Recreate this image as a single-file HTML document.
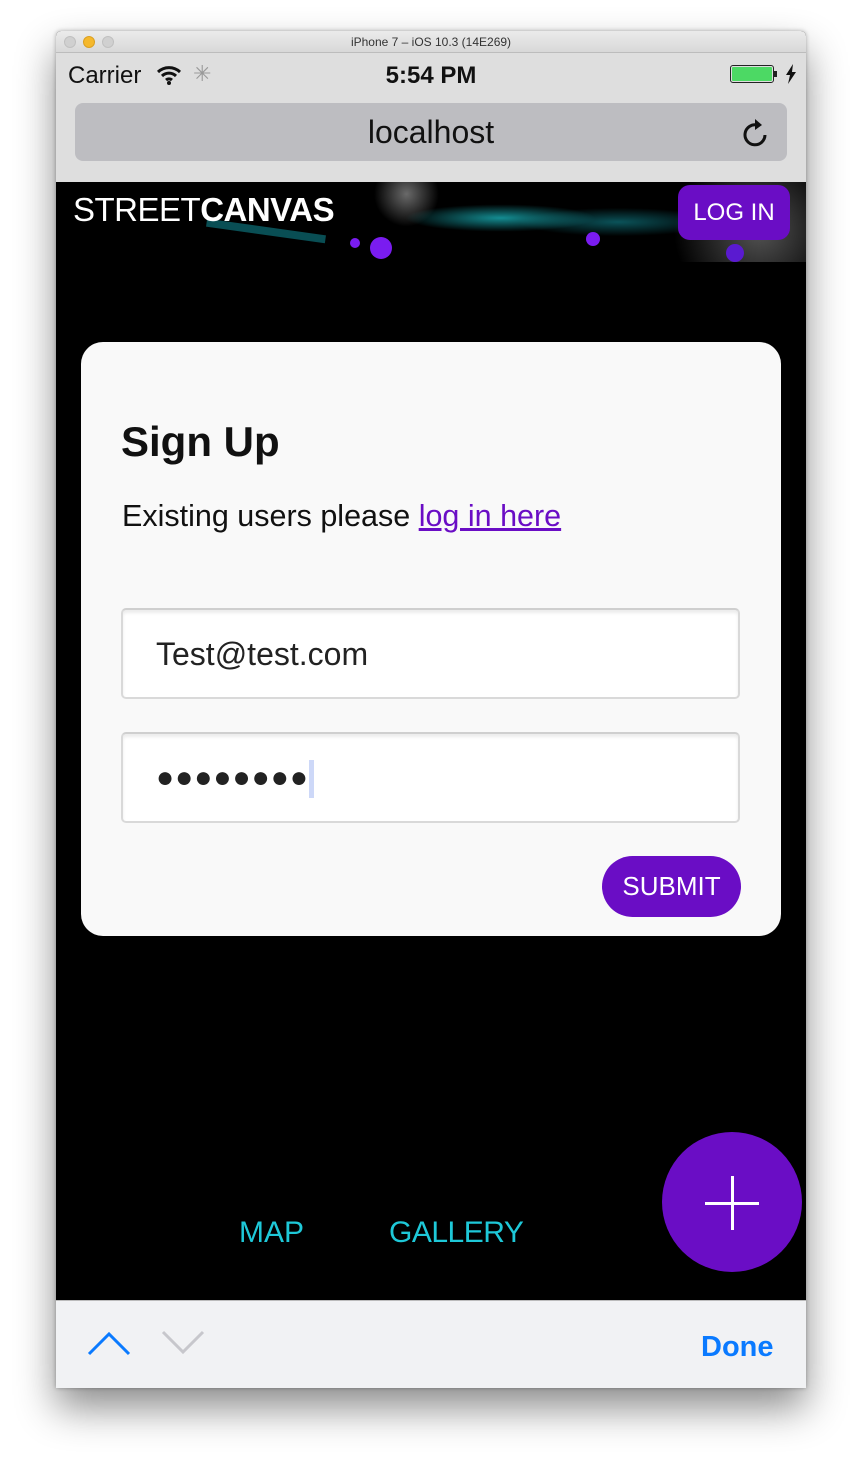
<!DOCTYPE html>
<html><head><meta charset="utf-8"><style>
*{margin:0;padding:0;box-sizing:border-box}
body{width:862px;height:1468px;background:#fff;position:relative;overflow:hidden;font-family:"Liberation Sans",sans-serif}
.win{position:absolute;left:56px;top:31px;width:750px;height:1357px;background:#000;box-shadow:0 20px 40px rgba(0,0,0,.45),0 0 4px rgba(0,0,0,.3);border-radius:5px 5px 0 0;overflow:hidden}
.title{position:absolute;left:0;top:0;width:750px;height:22px;background:linear-gradient(#ebebeb,#d8d8d8);border-bottom:1px solid #bcbcbc;font-size:12px;color:#333;text-align:center;line-height:22px}
.dot{position:absolute;top:5px;width:12px;height:12px;border-radius:50%;background:#d0d0d0;border:1px solid #c0c0c0}
.status{position:absolute;left:0;top:22px;width:750px;height:129px;background:#dedede}
.abs{position:absolute}
.url{position:absolute;left:19px;top:50px;width:712px;height:58px;background:#bdbdc1;border-radius:8px;text-align:center;line-height:58px;font-size:32px;color:#111}
.banner{position:absolute;left:0;top:151px;width:750px;height:80px;background:#000;overflow:hidden}
.card{position:absolute;left:25px;top:311px;width:700px;height:594px;background:#f9f9f9;border-radius:22px}
.inp{position:absolute;left:40px;width:619px;height:91px;background:#fff;border:2px solid #d9d9d9;border-top-color:#cfcfcf;border-radius:5px;box-shadow:inset 0 3px 3px rgba(0,0,0,.08);font-size:32px;color:#222;padding-left:33px;line-height:88px}
</style></head><body>
<div class="win">
<div class="title"><span class="dot" style="left:8px"></span><span class="dot" style="left:27px;background:#f5b82c;border-color:#dba022"></span><span class="dot" style="left:46px"></span>iPhone 7 – iOS 10.3 (14E269)</div>
<div class="status">
<div class="abs" style="left:12px;top:9px;font-size:24px;color:#111">Carrier</div>
<svg class="abs" style="left:100px;top:12px" width="26" height="20" viewBox="0 0 26 20"><path d="M2 7a16 16 0 0 1 22 0M6 11a10 10 0 0 1 14 0M10 15a4.5 4.5 0 0 1 6 0" stroke="#111" stroke-width="3" fill="none"/><circle cx="13" cy="18" r="2" fill="#111"/></svg>
<div class="abs" style="left:137px;top:8px;font-size:22px;color:#999">✳</div>
<div class="abs" style="left:0;width:750px;text-align:center;top:9px;font-size:24px;font-weight:bold;color:#111">5:54 PM</div>
<div class="abs" style="left:674px;top:12px;width:44px;height:18px;border:1.5px solid #222;border-radius:3px;padding:1px"><div style="width:100%;height:100%;background:#4cd964;border-radius:1px"></div></div>
<div class="abs" style="left:718px;top:18px;width:3px;height:6px;background:#222"></div>
<svg class="abs" style="left:729px;top:11px" width="12" height="20" viewBox="0 0 12 20"><path d="M8 0L1 11h4l-2 9 8-12H7z" fill="#111"/></svg>
<div class="url">localhost
<svg class="abs" style="left:666px;top:14px" width="30" height="32" viewBox="0 0 30 32"><path d="M24 18a10 10 0 1 1-8-10" stroke="#111" stroke-width="3" fill="none"/><path d="M14 2l7 6-7 5z" fill="#111"/></svg></div>
</div>
<div class="banner">
<div class="abs" style="left:280px;top:0;width:470px;height:80px;background:radial-gradient(ellipse at 35% 45%,rgba(28,200,208,.7) 0,transparent 22%),radial-gradient(ellipse at 60% 50%,rgba(18,138,149,.6) 0,transparent 25%),radial-gradient(circle at 90% 60%,rgba(140,140,140,.6) 0,transparent 20%),radial-gradient(circle at 15% 15%,rgba(150,150,150,.7) 0,transparent 8%)"></div>
<div class="abs" style="left:150px;top:45px;width:120px;height:8px;background:#0d6f78;transform:rotate(8deg);opacity:.7"></div>
<div class="abs" style="left:314px;top:55px;width:22px;height:22px;border-radius:50%;background:#7a1cf0"></div>
<div class="abs" style="left:294px;top:56px;width:10px;height:10px;border-radius:50%;background:#7a1cf0"></div>
<div class="abs" style="left:530px;top:50px;width:14px;height:14px;border-radius:50%;background:#7a1cf0"></div>
<div class="abs" style="left:670px;top:62px;width:18px;height:18px;border-radius:50%;background:#5a1ad0"></div>
<div class="abs" style="left:17px;top:9px;font-size:33px;color:#fff;letter-spacing:-0.5px"><span style="font-weight:300">STREET</span><b>CANVAS</b></div>
<div class="abs" style="left:622px;top:3px;width:112px;height:55px;background:#6a0dc5;border-radius:12px;color:#fff;font-size:24px;text-align:center;line-height:55px">LOG IN</div>
</div>
<div class="card">
<div class="abs" style="left:40px;top:76px;font-size:42px;font-weight:bold;color:#111">Sign Up</div>
<div class="abs" style="left:41px;top:157px;font-size:30.5px;color:#111">Existing users please <span style="color:#6a0dc5;text-decoration:underline">log in here</span></div>
<div class="inp" style="top:266px">Test@test.com</div>
<div class="inp" style="top:390px;font-size:30px;letter-spacing:1px">●●●●●●●●<span style="display:inline-block;width:5px;height:38px;background:#cdd8f8;vertical-align:middle"></span></div>
<div class="abs" style="left:521px;top:514px;width:139px;height:61px;background:#6a0dc5;border-radius:31px;color:#fff;font-size:26px;text-align:center;line-height:61px">SUBMIT</div>
</div>
<div class="abs" style="left:183px;top:1185px;font-size:30px;color:#1ec8d8;font-weight:300">MAP</div>
<div class="abs" style="left:333px;top:1185px;font-size:30px;color:#1ec8d8;font-weight:300;letter-spacing:-0.5px">GALLERY</div>
<div class="abs" style="left:606px;top:1101px;width:140px;height:140px;border-radius:50%;background:#6a0dc5"></div>
<div class="abs" style="left:649px;top:1171px;width:54px;height:3px;background:#fff"></div>
<div class="abs" style="left:675px;top:1145px;width:3px;height:54px;background:#fff"></div>
<div class="abs" style="left:0;top:1269px;width:750px;height:88px;background:#f1f2f4;border-top:1px solid #bbb">
<svg class="abs" style="left:30px;top:28px" width="124" height="28" viewBox="0 0 124 28"><path d="M3 25L23 5L43 25" stroke="#0a7aff" stroke-width="3" fill="none"/><path d="M77 3L97 23L117 3" stroke="#c7c7cc" stroke-width="3" fill="none"/></svg>
<div class="abs" style="left:645px;top:30px;font-size:29px;font-weight:bold;color:#0a7aff">Done</div>
</div>
</div>
</body></html>
